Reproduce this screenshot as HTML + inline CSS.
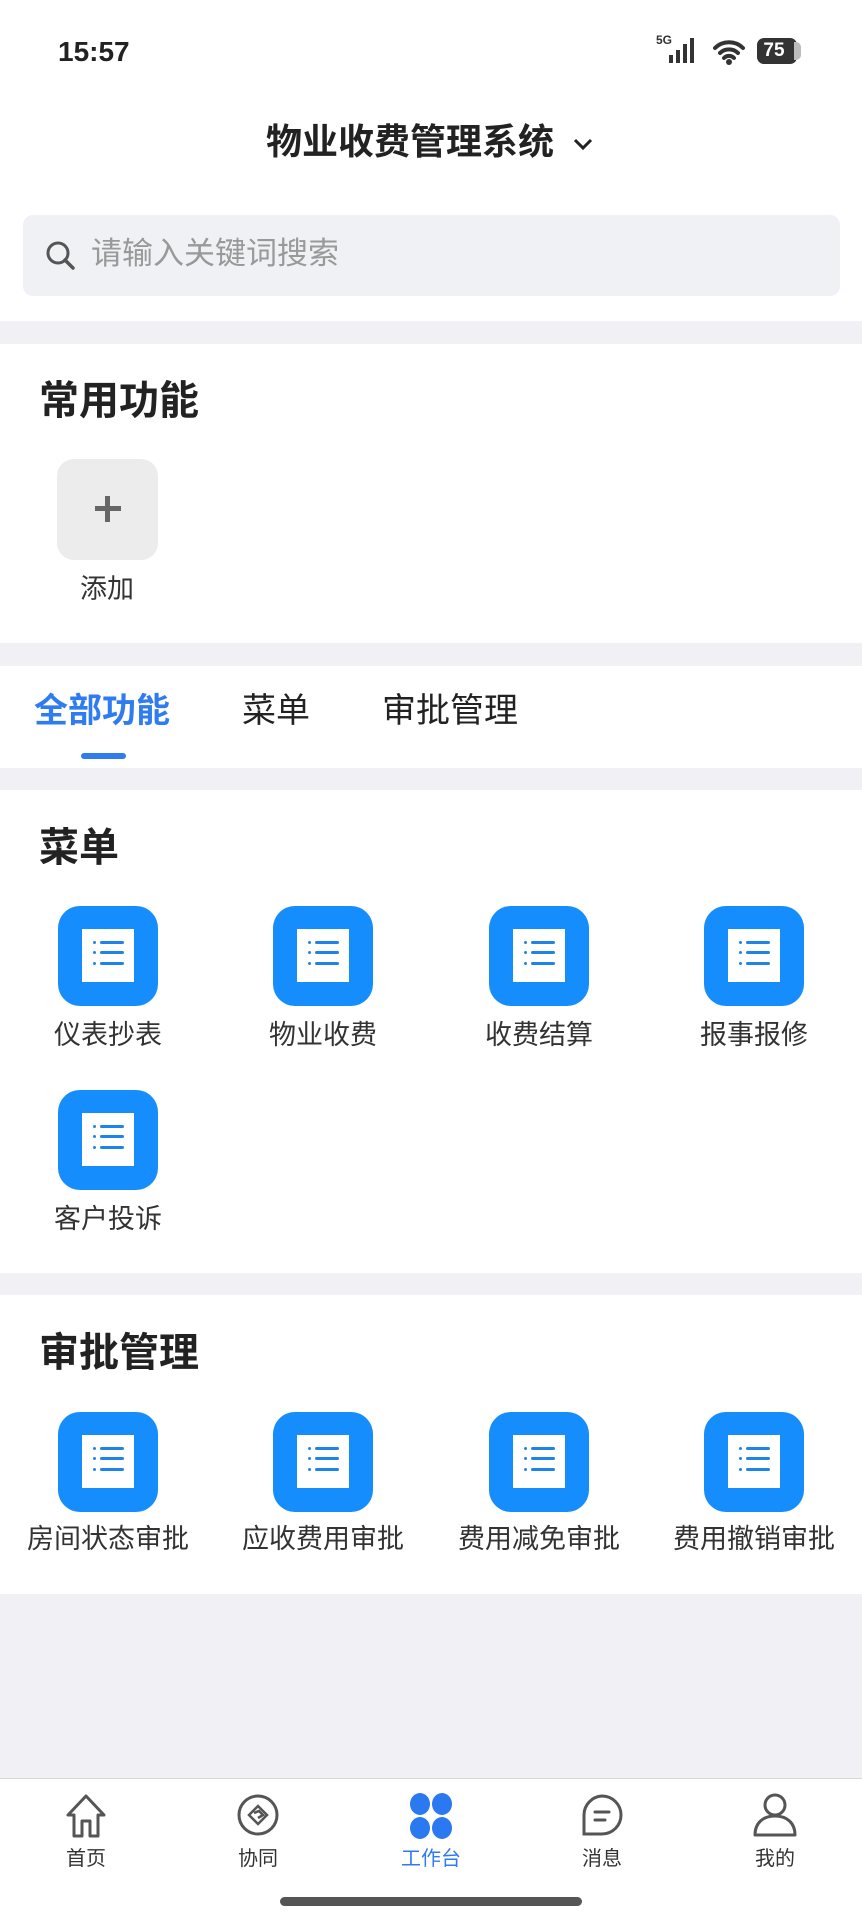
<!DOCTYPE html>
<html><head><meta charset="utf-8">
<style>
*{margin:0;padding:0;box-sizing:border-box}
body{width:862px;height:1920px;background:#f1f1f5;font-family:"Liberation Sans","Noto Sans CJK SC",sans-serif;position:relative;overflow:hidden;color:#222}
.abs{position:absolute}
.white{position:absolute;left:0;width:862px;background:#fff}
.h{position:absolute;left:39px;font-size:40px;font-weight:bold;color:#222;line-height:1}
.ic{position:absolute;width:100px;height:100px;border-radius:22px;background:#168dfd}
.ic .p{position:absolute;left:24px;top:23px;width:52px;height:53px;background:#fff}
.ic .p i{position:absolute;left:11px;width:3px;height:3px;border-radius:2px;background:#1e84ec}
.ic .p b{position:absolute;left:18px;width:24px;height:3px;border-radius:2px;background:#1e84ec}
.lb{position:absolute;width:200px;text-align:center;font-size:27px;color:#333;line-height:1}
.nav{position:absolute;width:120px;text-align:center;font-size:20px;color:#333;top:1849px;line-height:1}
</style></head><body>
<div class="white" style="top:0;height:321px"></div>
<div class="abs" style="left:58px;top:36px;font-size:28px;font-weight:bold;color:#222">15:57</div>
<!-- status icons -->
<div class="abs" style="left:656px;top:33px;font-size:12px;font-weight:bold;color:#333">5G</div>
<div class="abs" style="left:669px;top:55px;width:4px;height:8px;background:#333"></div>
<div class="abs" style="left:676px;top:50px;width:4px;height:13px;background:#333"></div>
<div class="abs" style="left:683px;top:44px;width:4px;height:19px;background:#333"></div>
<div class="abs" style="left:690px;top:38px;width:4px;height:25px;background:#333"></div>
<svg class="abs" style="left:712px;top:38px" width="34" height="28" viewBox="0 0 34 28"><path d="M3 10a20 20 0 0 1 28 0M8 15a13 13 0 0 1 18 0M12 20a7 7 0 0 1 10 0" stroke="#333" stroke-width="4" fill="none" stroke-linecap="round"/><circle cx="17" cy="24" r="3" fill="#333"/></svg>
<div class="abs" style="left:757px;top:38px;width:40px;height:26px;border-radius:7px;background:#333;color:#fff;font-size:19px;font-weight:bold;text-align:center;line-height:26px;padding-right:6px">75</div>
<div class="abs" style="left:794px;top:42px;width:7px;height:18px;border-radius:0 5px 5px 0;background:#bbb"></div>

<div class="abs" style="left:266px;top:124px;font-size:36px;font-weight:bold;color:#222;line-height:1">物业收费管理系统</div>
<svg class="abs" style="left:572px;top:137px" width="22" height="14" viewBox="0 0 22 14"><path d="M3 3l8 8 8-8" stroke="#222" stroke-width="3" fill="none"/></svg>

<div class="abs" style="left:23px;top:215px;width:817px;height:81px;border-radius:10px;background:#f0f1f5"></div>
<svg class="abs" style="left:45px;top:240px" width="32" height="32" viewBox="0 0 32 32"><circle cx="13" cy="13" r="10" stroke="#555" stroke-width="3" fill="none"/><path d="M20 20l8 8" stroke="#555" stroke-width="3.5" stroke-linecap="round"/></svg>
<div class="abs" style="left:91px;top:238px;font-size:31px;color:#999;line-height:1">请输入关键词搜索</div>

<div class="white" style="top:344px;height:299px"></div>
<div class="h" style="top:381px">常用功能</div>
<div class="abs" style="left:57px;top:459px;width:101px;height:101px;border-radius:17px;background:#ececec"></div>
<div class="abs" style="left:95px;top:506px;width:26px;height:5px;background:#666"></div>
<div class="abs" style="left:105px;top:496px;width:5px;height:26px;background:#666"></div>
<div class="lb" style="left:7px;top:576px">添加</div>

<div class="white" style="top:666px;height:102px"></div>
<div class="abs" style="left:34px;top:694px;font-size:34px;font-weight:bold;color:#2f7bf0;line-height:1">全部功能</div>
<div class="abs" style="left:242px;top:694px;font-size:34px;color:#222;line-height:1">菜单</div>
<div class="abs" style="left:382px;top:694px;font-size:34px;color:#222;line-height:1">审批管理</div>
<div class="abs" style="left:81px;top:753px;width:45px;height:6px;border-radius:3px;background:#2f7bf0"></div>

<div class="white" style="top:790px;height:483px"></div>
<div class="h" style="top:828px">菜单</div>

<div class="white" style="top:1295px;height:299px"></div>
<div class="h" style="top:1333px">审批管理</div>

<div class="white" style="top:1778px;height:142px;border-top:1px solid #d8d8d8"></div>

<div id="icons"></div>
<script>
var items=[[108,906,1022,"仪表抄表"],[323,906,1022,"物业收费"],[539,906,1022,"收费结算"],[754,906,1022,"报事报修"],[108,1090,1206,"客户投诉"],
[108,1412,1526,"房间状态审批"],[323,1412,1526,"应收费用审批"],[539,1412,1526,"费用减免审批"],[754,1412,1526,"费用撤销审批"]];
var h="";
items.forEach(function(a){
h+='<div class="ic" style="left:'+(a[0]-50)+'px;top:'+a[1]+'px"><div class="p">';
[12,22,33].forEach(function(y){h+='<i style="top:'+y+'px"></i><b style="top:'+y+'px"></b>';});
h+='</div></div><div class="lb" style="left:'+(a[0]-100)+'px;top:'+a[2]+'px">'+a[3]+'</div>';
});
document.getElementById("icons").innerHTML=h;
</script>

<!-- nav icons -->
<svg class="abs" style="left:64px;top:1793px" width="44" height="46" viewBox="0 0 44 46"><path d="M22 3L4 22h6v21h8V28h8v15h8V22h6z" stroke="#555" stroke-width="3" fill="none" stroke-linejoin="round"/></svg>
<svg class="abs" style="left:236px;top:1793px" width="44" height="44" viewBox="0 0 44 44"><circle cx="22" cy="22" r="19" stroke="#555" stroke-width="3" fill="none"/><path d="M13 22l9-9 9 9-9 9zM18 20l5-2 4 4-5 3" stroke="#555" stroke-width="2.5" fill="none"/></svg>
<svg class="abs" style="left:408px;top:1793px" width="46" height="46" viewBox="0 0 46 46" fill="#2b79f1"><ellipse cx="12" cy="11" rx="10" ry="11"/><ellipse cx="34" cy="11" rx="10" ry="11"/><ellipse cx="12" cy="35" rx="10" ry="11"/><ellipse cx="34" cy="35" rx="10" ry="11"/></svg>
<svg class="abs" style="left:580px;top:1793px" width="44" height="44" viewBox="0 0 44 44"><path d="M22 3a19 19 0 1 1 0 38H4V22A19 19 0 0 1 22 3z" stroke="#555" stroke-width="3" fill="none"/><path d="M15 19h14M15 27h10" stroke="#555" stroke-width="3" stroke-linecap="round"/></svg>
<svg class="abs" style="left:752px;top:1792px" width="46" height="46" viewBox="0 0 46 46"><circle cx="23" cy="13" r="10" stroke="#555" stroke-width="3" fill="none"/><path d="M3 43c0-12 8-19 20-19s20 7 20 19z" stroke="#555" stroke-width="3" fill="none" stroke-linejoin="round"/></svg>
<div class="nav" style="left:26px">首页</div>
<div class="nav" style="left:198px">协同</div>
<div class="nav" style="left:371px;color:#2f7bf0">工作台</div>
<div class="nav" style="left:542px">消息</div>
<div class="nav" style="left:715px">我的</div>
<div class="abs" style="left:280px;top:1897px;width:302px;height:9px;border-radius:5px;background:#555"></div>
</body></html>
